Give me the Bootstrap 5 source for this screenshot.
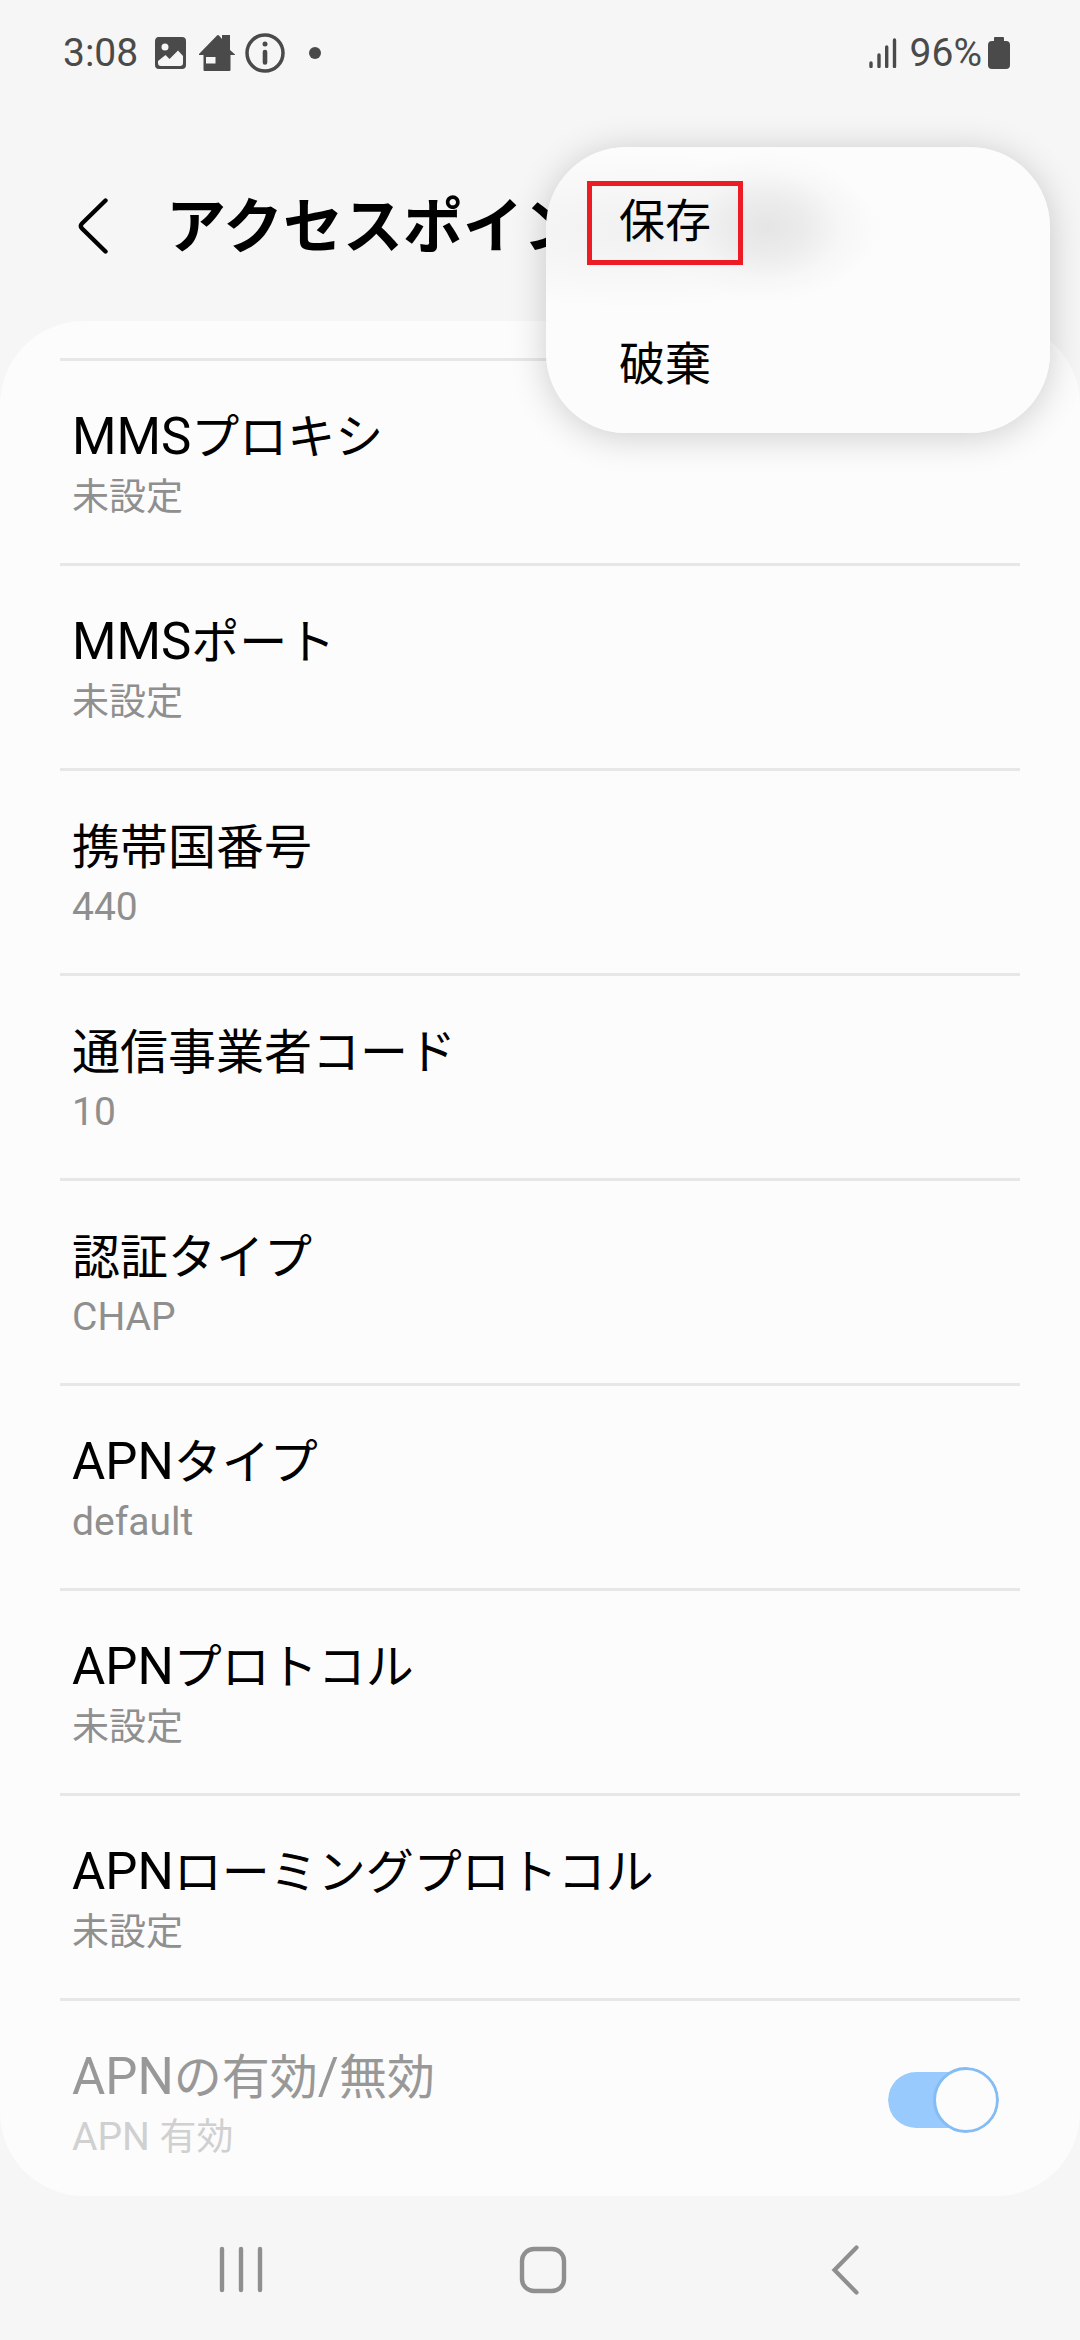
<!DOCTYPE html>
<html lang="ja">
<head>
<meta charset="utf-8">
<meta name="viewport" content="width=device-width, initial-scale=1">
<title>アクセスポイン</title>
<link href="https://cdn.jsdelivr.net/npm/bootstrap@5.3.0/dist/css/bootstrap.min.css" rel="stylesheet">
<style>
  body {
    background: #f6f6f6;
    color: #000;
    font-family: Roboto, "Noto Sans CJK JP", sans-serif;
  }
  svg { display: block; flex: none; }

  /* Status bar */
  .status-bar { height: 104px; padding: 2px 70px 0 63px; color: #4a4a4a; font-size: 39px; line-height: 48px; }
  .status-icons { gap: 11px; margin-left: 17px; }
  .status-right { gap: 6px; }
  .info-icon { margin-left: -4px; }
  .signal-icon { margin-right: 7px; }

  /* App bar */
  .app-bar { height: 217px; padding: 30px 60px 0 72px; gap: 52px; }
  .app-title { font-size: 60px; line-height: 80px; font-weight: 700; }

  /* Settings card */
  .settings-card { background: #fcfcfc; border-radius: 84px; padding: 37px 60px 0; }
  .settings-card .list-group { border-radius: 0; }
  .settings-card .list-group .setting-item {
    background: transparent;
    border: 0 solid #e7e7e7;
    border-top-width: 3px;
    padding: 47px 21px 41px 12px;
    color: #000;
  }
  .settings-card .list-group .setting-item.is-off { padding-top: 37px; padding-bottom: 34px; }
  .is-off label { padding-top: 10px; }
  .setting-name { font-size: 48px; line-height: 60px; }
  .setting-name .latin { font-size: 51px; line-height: 1; }
  .setting-value { font-size: 37px; line-height: 48px; margin-top: 6px; color: #8f8f8f; }
  .setting-value .latin { font-size: 39px; line-height: 1; }
  .is-off .setting-name { color: #989898; }
  .is-off .setting-value { color: #d0d0d0; }

  .form-check-input.apn-switch {
    width: 111px;
    height: 66px;
    margin: 0;
    border: 0;
    border-radius: 33px;
    background: transparent url("data:image/svg+xml,%3Csvg xmlns='http://www.w3.org/2000/svg' viewBox='0 0 111 66'%3E%3Crect y='5' width='110' height='56' rx='28' fill='%2399cafd'/%3E%3Ccircle cx='78' cy='33' r='31.5' fill='%23fcfcfc' stroke='%2384bcf6' stroke-width='3'/%3E%3C/svg%3E") center / 111px 66px no-repeat;
  }
  .form-check-input.apn-switch:disabled { opacity: 1; }

  /* Overflow menu, floating over the app bar */
  .overflow-menu {
    top: 147px;
    right: 30px;
    width: 504px;
    border-radius: 80px;
    background: radial-gradient(ellipse 105px 76px at 222px 80px, #e5e5e5 0%, #e9e9e9d0 35%, #f3f3f370 70%, #fcfcfc00 100%),
                radial-gradient(ellipse 260px 78px at 90px 84px, #f1f1f1 0%, #f5f5f5 40%, #fcfcfc 100%);
    box-shadow: 0 4px 36px rgba(0, 0, 0, .19);
    overflow: hidden;
  }
  .menu-entry { height: 143px; border: 0; background: transparent; padding: 8px 41px 0; font-size: 46px; line-height: 56px; color: #000; }
  .menu-text { border: 5px solid transparent; padding: 7px 27px 11px; }
  .menu-text.marked { border-color: #ed1c24; }

  /* Navigation bar */
  .nav-keys { height: 144px; padding: 4px 84px 0 90px; }
  .nav-keys .btn { border: 0; border-radius: 0; color: #8f8f8f; }
</style>
</head>
<body>
<div class="position-relative">

  <div class="status-bar d-flex align-items-center justify-content-between">
    <div class="d-flex align-items-center">
      <span>3:08</span>
      <div class="status-icons d-flex align-items-center">
        <svg width="32" height="32" viewBox="0 0 32 32" aria-hidden="true">
          <path fill="currentColor" fill-rule="evenodd" d="M5 0h22a4 4 0 0 1 4 4v24a4 4 0 0 1-4 4H4a4 4 0 0 1-4-4V4a4 4 0 0 1 5-4zM10 6.500a3.500 3.500 0 1 0 0 7 3.500 3.500 0 0 0 0-7zM3 24v2q0 3 3 3h19q3 0 3-3v-7l-5-5.500-8.500 8.500-4-4z"/>
        </svg>
        <svg width="40" height="38" viewBox="0 0 40 38" aria-hidden="true">
          <path fill="currentColor" fill-rule="evenodd" d="M1 20L19 1.500q1-1 2 0l3 3.500V1h8v15l5 4.500V21h-4.500v15q0 1-1 1H6.500q-1 0-1-1V21H1zM8 23v6.500h9.500V23z"/>
        </svg>
        <svg class="info-icon" width="40" height="40" viewBox="0 0 40 40" aria-hidden="true">
          <circle cx="20" cy="20" r="18" fill="none" stroke="currentColor" stroke-width="3.500"/>
          <circle cx="20" cy="11" r="2.500" fill="currentColor"/>
          <path d="M20 19v10.500" stroke="currentColor" stroke-width="4.600" stroke-linecap="round"/>
        </svg>
        <svg width="42" height="12" viewBox="0 0 42 12" aria-hidden="true">
          <circle cx="19" cy="6" r="6" fill="currentColor"/>
        </svg>
      </div>
    </div>
    <div class="status-right d-flex align-items-center">
      <svg class="signal-icon" width="28" height="30" viewBox="0 0 28 30" aria-hidden="true">
        <path d="M2 25v3.500M10 17v11.500M17.700 9v19.500M25.500 2v26.500" stroke="currentColor" stroke-width="3.400" stroke-linecap="round"/>
      </svg>
      <span>96%</span>
      <svg width="22" height="32" viewBox="0 0 22 32" aria-hidden="true">
        <path fill="currentColor" d="M7 0h8q1 0 1 1v3h2q4 0 4 4v20q0 4-4 4H4q-4 0-4-4V8q0-4 4-4h2V1q0-1 1-1z"/>
      </svg>
    </div>
  </div>

  <header class="app-bar d-flex align-items-center">
    <button type="button" class="btn p-0 border-0" aria-label="戻る">
      <svg width="42" height="60" viewBox="0 2 42 60" aria-hidden="true">
        <path d="M33.500 4.500L10 27.500Q7.500 30 10 32.500L33.500 55.500" fill="none" stroke="#000" stroke-width="4.400" stroke-linecap="round"/>
      </svg>
    </button>
    <h1 class="app-title m-0">アクセスポイン</h1>
  </header>

  <main class="settings-card">
    <div class="list-group">
      <button type="button" class="list-group-item setting-item text-start">
        <span class="setting-name d-block"><span class="latin">MMS</span>プロキシ</span>
        <span class="setting-value d-block">未設定</span>
      </button>
      <button type="button" class="list-group-item setting-item text-start">
        <span class="setting-name d-block"><span class="latin">MMS</span>ポート</span>
        <span class="setting-value d-block">未設定</span>
      </button>
      <button type="button" class="list-group-item setting-item text-start">
        <span class="setting-name d-block">携帯国番号</span>
        <span class="setting-value d-block"><span class="latin">440</span></span>
      </button>
      <button type="button" class="list-group-item setting-item text-start">
        <span class="setting-name d-block">通信事業者コード</span>
        <span class="setting-value d-block"><span class="latin">10</span></span>
      </button>
      <button type="button" class="list-group-item setting-item text-start">
        <span class="setting-name d-block">認証タイプ</span>
        <span class="setting-value d-block"><span class="latin">CHAP</span></span>
      </button>
      <button type="button" class="list-group-item setting-item text-start">
        <span class="setting-name d-block"><span class="latin">APN</span>タイプ</span>
        <span class="setting-value d-block"><span class="latin">default</span></span>
      </button>
      <button type="button" class="list-group-item setting-item text-start">
        <span class="setting-name d-block"><span class="latin">APN</span>プロトコル</span>
        <span class="setting-value d-block">未設定</span>
      </button>
      <button type="button" class="list-group-item setting-item text-start">
        <span class="setting-name d-block"><span class="latin">APN</span>ローミングプロトコル</span>
        <span class="setting-value d-block">未設定</span>
      </button>
      <div class="list-group-item setting-item is-off d-flex align-items-center justify-content-between">
        <label for="apnEnabled">
          <span class="setting-name d-block"><span class="latin">APN</span>の有効<span class="latin">/</span>無効</span>
          <span class="setting-value d-block"><span class="latin">APN </span>有効</span>
        </label>
        <input class="form-check-input apn-switch" type="checkbox" role="switch" id="apnEnabled" checked disabled>
      </div>
    </div>
  </main>

  <nav class="nav-keys d-flex align-items-center">
    <button type="button" class="btn p-0 flex-fill w-100 d-flex justify-content-center" aria-label="履歴">
      <svg width="48" height="48" viewBox="0 0 48 48" aria-hidden="true">
        <path d="M5 3v41M24 3v41M43 3v41" stroke="currentColor" stroke-width="4.400" stroke-linecap="round"/>
      </svg>
    </button>
    <button type="button" class="btn p-0 flex-fill w-100 d-flex justify-content-center" aria-label="ホーム">
      <svg width="48" height="48" viewBox="0 0 48 48" aria-hidden="true">
        <rect x="3" y="3" width="42" height="42" rx="12" fill="none" stroke="currentColor" stroke-width="4.400"/>
      </svg>
    </button>
    <button type="button" class="btn p-0 flex-fill w-100 d-flex justify-content-center" aria-label="戻る">
      <svg width="28" height="50" viewBox="0 0 28 50" aria-hidden="true">
        <path d="M25.500 2.500L3.500 25L25.500 47.500" fill="none" stroke="currentColor" stroke-width="4.200" stroke-linecap="round"/>
      </svg>
    </button>
  </nav>

  <div class="overflow-menu position-absolute" role="menu">
    <button type="button" class="menu-entry w-100 d-flex align-items-center" role="menuitem"><span class="menu-text marked">保存</span></button>
    <button type="button" class="menu-entry w-100 d-flex align-items-center" role="menuitem"><span class="menu-text">破棄</span></button>
  </div>

</div>
<script src="https://cdn.jsdelivr.net/npm/bootstrap@5.3.0/dist/js/bootstrap.bundle.min.js"></script>
</body>
</html>
